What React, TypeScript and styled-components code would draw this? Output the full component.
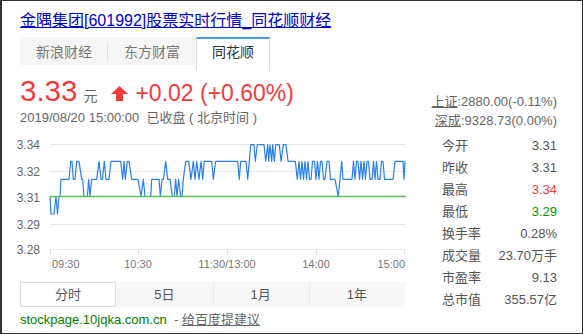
import React from 'react';
import styled, { createGlobalStyle } from 'styled-components';

const GlobalStyle = createGlobalStyle`
  html, body {
    margin: 0;
    padding: 0;
    background: #fff;
  }
  body {
    font-family: "Liberation Sans", "Noto Sans CJK SC", sans-serif;
  }
`;

// chart coords are page pixels, shifted by the svg origin
const OX = 20;
const OY = 135;
const LEVELS = [214, 196.5, 179.3, 161.3, 144.7];

const POINTS: [number, number][] = [
  [50, 1], [51, 0], [54, 0], [56, 1], [57.5, 0], [59, 1], [60, 1], [61, 2], [69, 2], [70.7, 3],
  [72, 3], [73.3, 2], [75, 2], [76.7, 3], [79, 3], [81.7, 2], [82.7, 2], [84, 1], [87.3, 1],
  [88.7, 2], [90, 1], [91.7, 2], [96.7, 2], [99, 3], [101, 2], [102.5, 2], [104.3, 3], [106, 2],
  [109, 2], [111, 3], [120.7, 3], [122.7, 2], [124, 3], [125.3, 2], [127.3, 3], [129, 3],
  [131.7, 2], [138, 2], [141, 1], [143.3, 2], [145, 1], [150.7, 1], [151.7, 2], [159, 2],
  [160.3, 1], [162, 2], [163.5, 2], [165.7, 3], [167.7, 2], [170, 2], [172.3, 1], [174.3, 1],
  [175.7, 2], [177, 1], [178.7, 2], [180.7, 1], [182, 1], [183.3, 2], [185.7, 3], [188.7, 3],
  [191, 2], [193.3, 3], [195, 2], [196.7, 3], [199, 2], [201, 3], [202.7, 2], [204.3, 3],
  [211.7, 3], [213.3, 2], [215.7, 3], [237.7, 3], [239.3, 2], [240.7, 3], [246, 3], [247.7, 2],
  [249.3, 3], [250.7, 4], [254, 4], [255.3, 3], [257.3, 4], [264, 4], [265.7, 3], [267.7, 4],
  [268.7, 3], [270, 4], [271.7, 3], [272.7, 4], [274.3, 3], [275.7, 4], [279.3, 4], [281, 3],
  [283.3, 4], [286, 4], [288, 3], [295.3, 3], [297.3, 2], [299, 3], [300.5, 2], [302, 3],
  [303.5, 2], [305, 3], [306.5, 2], [308, 3], [309.5, 2], [311, 2], [312.5, 3], [314.5, 3],
  [316, 2], [317.5, 3], [319, 2], [320.5, 3], [322, 3], [323.5, 2], [325, 2], [327, 3],
  [329, 3], [330.5, 2], [335, 2], [338.3, 1], [341.7, 3], [343, 2], [352, 2], [353.5, 3],
  [355, 2], [356.5, 3], [358, 3], [359.5, 2], [361, 3], [362.5, 2], [364, 3], [365.5, 2],
  [367, 3], [368.5, 3], [370, 2], [372, 2], [373.5, 3], [375, 2], [376.5, 3], [378, 2],
  [380, 2], [381.5, 3], [383, 3], [384.5, 2], [393, 2], [395, 3], [403, 3], [404, 2], [405, 3],
];

const GRID = [
  { y: 144.5, label: '3.34' },
  { y: 171.5, label: '3.32' },
  { y: 224.5, label: '3.29' },
  { y: 249.5, label: '3.28' },
];

const TICKS = [50.5, 138.5, 227.5, 316.5, 404.5];

const STATS = [
  { label: '今开', value: '3.31' },
  { label: '昨收', value: '3.31' },
  { label: '最高', value: '3.34', tone: 'up' },
  { label: '最低', value: '3.29', tone: 'down' },
  { label: '换手率', value: '0.28%' },
  { label: '成交量', value: '23.70万手' },
  { label: '市盈率', value: '9.13' },
  { label: '总市值', value: '355.57亿' },
];

const SOURCES = ['新浪财经', '东方财富', '同花顺'];
const PERIODS = ['分时', '5日', '1月', '1年'];

const App: React.FC = () => {
  const line = POINTS.map(([x, l]) => `${x - OX},${LEVELS[l] - OY}`).join(' ');

  return (
    <>
      <GlobalStyle />
      <Frame>
        <Title href="#">金隅集团[601992]股票实时行情_同花顺财经</Title>
        <TabBar>
          {SOURCES.map((s, i) => (
            <Tab key={s} $active={i === 2} $divider={i === 0}>
              {s}
            </Tab>
          ))}
        </TabBar>
        <Main>
          <PriceBlock>
            <PriceRow>
              <Price>3.33</Price>
              <Unit>元</Unit>
              <Arrow width="17" height="15" viewBox="0 0 17 15">
                <polygon points="8.5,0 17,8 12,8 12,15 5,15 5,8 0,8" fill="#f23c3c" />
              </Arrow>
              <Change>+0.02 (+0.60%)</Change>
            </PriceRow>
            <DateLine>2019/08/20 15:00:00&nbsp; 已收盘 ( 北京时间 )</DateLine>
          </PriceBlock>
          <IndexBlock>
            <IndexLine>
              <IndexName>上证</IndexName>:2880.00(-0.11%)
            </IndexLine>
            <IndexLine>
              <IndexName>深成</IndexName>:9328.73(0.00%)
            </IndexLine>
          </IndexBlock>

          <LeftCol>
            <Chart width="390" height="140" viewBox="0 0 390 140">
              {GRID.map((g) => (
                <line key={g.label} x1={50 - OX} x2={406 - OX} y1={g.y - OY} y2={g.y - OY} stroke="#e8e8e8" strokeWidth="1" />
              ))}
              {TICKS.map((t) => (
                <line key={t} x1={t - OX} x2={t - OX} y1={249.5 - OY} y2={255 - OY} stroke="#e0e0e0" strokeWidth="1" />
              ))}
              <polyline points={line} fill="none" stroke="#2a7ff0" strokeWidth="1.2" strokeLinejoin="round" />
              <line x1={50 - OX} x2={406 - OX} y1={196.5 - OY} y2={196.5 - OY} stroke="#5cbf5c" strokeWidth="1.3" />
              {[...GRID, { y: 197, label: '3.31' }].map((g) => (
                <AxisText key={g.label} x={40 - OX} y={g.y - OY + 4.5} textAnchor="end">
                  {g.label}
                </AxisText>
              ))}
              <TimeText x={52 - OX} y={268 - OY}>09:30</TimeText>
              <TimeText x={138 - OX} y={268 - OY} textAnchor="middle">10:30</TimeText>
              <TimeText x={227 - OX} y={268 - OY} textAnchor="middle">11:30/13:00</TimeText>
              <TimeText x={316 - OX} y={268 - OY} textAnchor="middle">14:00</TimeText>
              <TimeText x={405 - OX} y={268 - OY} textAnchor="end">15:00</TimeText>
            </Chart>
            <PeriodBar>
              {PERIODS.map((p, i) => (
                <Period key={p} $active={i === 0}>
                  {p}
                </Period>
              ))}
            </PeriodBar>
          </LeftCol>

          <Stats>
            {STATS.map((s) => (
              <StatRow key={s.label}>
                <StatLabel>{s.label}</StatLabel>
                <StatValue $tone={s.tone}>{s.value}</StatValue>
              </StatRow>
            ))}
          </Stats>
        </Main>
        <Footer>
          <Domain>stockpage.10jqka.com.cn</Domain>
          <span>&nbsp; - </span>
          <Suggest href="#">给百度提建议</Suggest>
        </Footer>
      </Frame>
    </>
  );
};

export default App;

const Frame = styled.div`
  width: 583px;
  height: 334px;
  box-sizing: border-box;
  border: 1px solid #333;
  border-left-width: 2px;
  padding: 10px 25px 0 18px;
  overflow: hidden;
  color: #666;
`;

const Title = styled.a`
  display: block;
  font-size: 16px;
  line-height: 20px;
  color: #0000cc;
  text-decoration: underline;
  white-space: nowrap;
`;

const TabBar = styled.div`
  display: flex;
  margin-top: 6px;
  height: 28px;
`;

const Tab = styled.div<{ $active?: boolean; $divider?: boolean }>`
  position: relative;
  box-sizing: border-box;
  padding: 0 15px;
  font-size: 14px;
  line-height: 26px;
  color: ${({ $active }) => ($active ? '#333' : '#777')};
  background: ${({ $active }) => ($active ? '#fff' : '#f5f5f5')};
  border-top: 2px solid ${({ $active }) => ($active ? '#4b97e8' : '#f5f5f5')};
  border-left: 1px solid ${({ $active }) => ($active ? '#dcdcdc' : 'transparent')};
  border-right: 1px solid ${({ $active }) => ($active ? '#dcdcdc' : 'transparent')};
  height: ${({ $active }) => ($active ? '33px' : '28px')};
  white-space: nowrap;

  &::after {
    content: '';
    display: ${({ $divider }) => ($divider ? 'block' : 'none')};
    position: absolute;
    right: -1px;
    top: 5px;
    height: 17px;
    width: 1px;
    background: #dcdcdc;
  }
`;

const Main = styled.div`
  display: grid;
  grid-template-columns: 385px 152px;
  row-gap: 5px;
  margin-top: 9px;
`;

const PriceBlock = styled.div`
  display: flex;
  flex-direction: column;
  gap: 2px;
`;

const PriceRow = styled.div`
  display: flex;
  align-items: baseline;
  height: 34px;
  line-height: 34px;
  white-space: nowrap;
`;

const Price = styled.span`
  font-size: 29.5px;
  color: #f23c3c;
`;

const Unit = styled.span`
  margin-left: 6px;
  font-size: 14px;
  color: #666;
`;

const Arrow = styled.svg`
  margin-left: 14px;
  margin-bottom: -1px;
`;

const Change = styled.span`
  margin-left: 7px;
  font-size: 23px;
  color: #f23c3c;
`;

const DateLine = styled.div`
  font-size: 13px;
  line-height: 16px;
  color: #666;
  white-space: nowrap;
`;

const IndexBlock = styled.div`
  padding-top: 18px;
  text-align: right;
`;

const IndexLine = styled.div`
  font-size: 13px;
  line-height: 19px;
  color: #666;
  white-space: nowrap;
`;

const IndexName = styled.span`
  text-decoration: underline;
`;

const LeftCol = styled.div`
  display: flex;
  flex-direction: column;
`;

const Chart = styled.svg`
  display: block;
  overflow: visible;
`;

const AxisText = styled.text`
  font-family: "Liberation Sans", sans-serif;
  font-size: 12px;
  fill: #666;
`;

const TimeText = styled.text`
  font-family: "Liberation Sans", sans-serif;
  font-size: 11px;
  fill: #777;
`;

const PeriodBar = styled.div`
  display: grid;
  grid-template-columns: repeat(4, 1fr);
  margin-top: 7px;
  height: 25px;
  background: #f7f7f7;
`;

const Period = styled.div<{ $active?: boolean }>`
  box-sizing: border-box;
  text-align: center;
  font-size: 13px;
  line-height: 23px;
  color: #555;
  background: ${({ $active }) => ($active ? '#fff' : '#f7f7f7')};
  border: 1px solid ${({ $active }) => ($active ? '#dcdcdc' : '#f7f7f7')};
  border-left-color: ${({ $active }) => ($active ? '#dcdcdc' : '#ebebeb')};

  &:nth-child(2) {
    border-left-color: #f7f7f7;
  }
`;

const Stats = styled.div`
  padding-left: 37px;
  display: flex;
  flex-direction: column;
`;

const StatRow = styled.div`
  display: flex;
  justify-content: space-between;
  height: 22px;
  line-height: 22px;
  font-size: 13px;
  white-space: nowrap;
`;

const StatLabel = styled.span`
  color: #555;
`;

const StatValue = styled.span<{ $tone?: string }>`
  color: ${({ $tone }) => ($tone === 'up' ? '#f23c3c' : $tone === 'down' ? '#009900' : '#555')};
`;

const Footer = styled.div`
  margin-top: 1px;
  font-size: 13px;
  line-height: 16px;
  color: #666;
  white-space: nowrap;
`;

const Domain = styled.span`
  color: #008000;
`;

const Suggest = styled.a`
  color: #666;
  text-decoration: underline;
`;
